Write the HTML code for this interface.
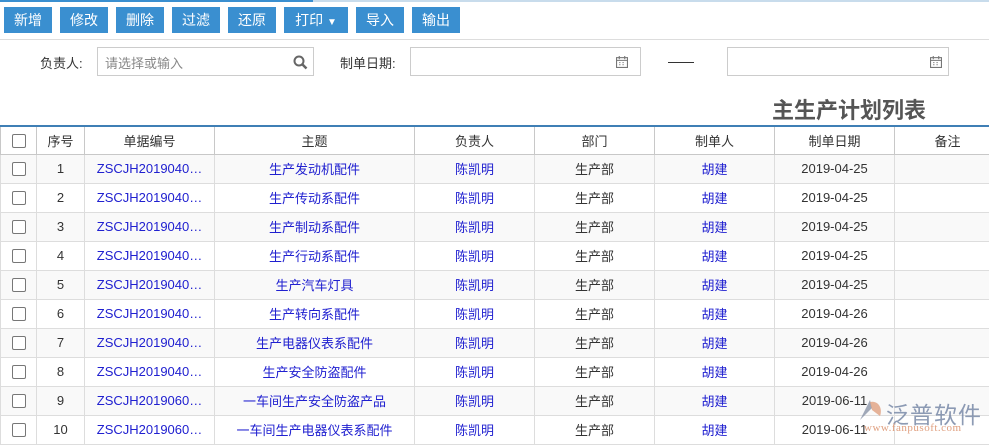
<!DOCTYPE html>
<html><head><meta charset="utf-8"><style>
*{margin:0;padding:0;box-sizing:border-box}
body{width:989px;height:442px;overflow:hidden;background:#fff;font-family:"Liberation Sans","Noto Sans CJK SC",sans-serif;font-size:13px;color:#333;position:relative}
.topline{position:absolute;left:0;top:0;width:989px;height:2px;background:#c8dcec}
.topline2{position:absolute;left:0;top:0;width:313px;height:2px;background:#3a8fd0}
.btn{position:absolute;top:7px;height:26px;background:#3a8fd0;color:#fff;font-size:14px;line-height:26px;text-align:center}
.sep{position:absolute;left:0;top:39px;width:989px;height:1px;background:#ddd}
.lbl{position:absolute;top:53px;font-size:13px;color:#333}
.inp{position:absolute;top:47px;height:29px;border:1px solid #ccc;background:#fff}
.title{position:absolute;left:772px;top:93px;font-size:22px;font-weight:bold;color:#555}
table{position:absolute;left:0;top:125px;border-collapse:collapse;table-layout:fixed;width:1000px;border-top:2px solid #3f7fb5}
td,th{border:1px solid #ddd;height:29px;text-align:center;font-weight:normal;white-space:nowrap;overflow:hidden;font-size:13px}
th{height:28px;border-color:#c8c8c8;color:#333}
tr:nth-child(even) td{background:#f9f9f9}
.b{color:#2020d0}
.cb{display:inline-block;width:14px;height:14px;border:1px solid #777;border-radius:2px;vertical-align:middle;background:#fff}
</style></head><body>
<div class="topline"></div><div class="topline2"></div>
<div class="btn" style="left:4px;width:48px">新增</div>
<div class="btn" style="left:60px;width:48px">修改</div>
<div class="btn" style="left:116px;width:48px">删除</div>
<div class="btn" style="left:172px;width:48px">过滤</div>
<div class="btn" style="left:228px;width:48px">还原</div>
<div class="btn" style="left:284px;width:64px">打印 <span style="font-size:10px">▼</span></div>
<div class="btn" style="left:356px;width:48px">导入</div>
<div class="btn" style="left:412px;width:48px">输出</div>
<div class="sep"></div>
<div class="lbl" style="left:40px">负责人:</div>
<div class="inp" style="left:97px;width:217px"><span style="position:absolute;left:7px;top:5px;color:#888">请选择或输入</span>
<svg style="position:absolute;right:5px;top:7px" width="15" height="15" viewBox="0 0 15 15"><circle cx="6" cy="6" r="4.5" fill="none" stroke="#666" stroke-width="2"/><path d="M9.5 9.5L13.5 13.5" stroke="#666" stroke-width="2.5"/></svg></div>
<div class="lbl" style="left:340px">制单日期:</div>
<div class="inp" style="left:410px;width:231px"><svg style="position:absolute;right:12px;top:8px" width="12" height="12" viewBox="0 0 11 11"><rect x="0.5" y="1.5" width="10" height="9" fill="none" stroke="#777"/><path d="M0 4h11M3 0v3M8 0v3M3 6h1M6 6h1M3 8h1M6 8h1" stroke="#777"/></svg></div>
<div style="position:absolute;left:668px;top:62px;width:26px;height:1px;background:#333"></div>
<div class="inp" style="left:727px;width:222px"><svg style="position:absolute;right:6px;top:8px" width="12" height="12" viewBox="0 0 11 11"><rect x="0.5" y="1.5" width="10" height="9" fill="none" stroke="#777"/><path d="M0 4h11M3 0v3M8 0v3M3 6h1M6 6h1M3 8h1M6 8h1" stroke="#777"/></svg></div>
<div class="title">主生产计划列表</div>
<table>
<colgroup><col style="width:36px"><col style="width:48px"><col style="width:130px"><col style="width:200px"><col style="width:120px"><col style="width:120px"><col style="width:120px"><col style="width:120px"><col style="width:106px"></colgroup>
<tr><th><span class="cb"></span></th><th>序号</th><th>单据编号</th><th>主题</th><th>负责人</th><th>部门</th><th>制单人</th><th>制单日期</th><th>备注</th></tr>
<tr><td><span class="cb"></span></td><td>1</td><td class="b">ZSCJH2019040…</td><td class="b">生产发动机配件</td><td class="b">陈凯明</td><td>生产部</td><td class="b">胡建</td><td>2019-04-25</td><td></td></tr>
<tr><td><span class="cb"></span></td><td>2</td><td class="b">ZSCJH2019040…</td><td class="b">生产传动系配件</td><td class="b">陈凯明</td><td>生产部</td><td class="b">胡建</td><td>2019-04-25</td><td></td></tr>
<tr><td><span class="cb"></span></td><td>3</td><td class="b">ZSCJH2019040…</td><td class="b">生产制动系配件</td><td class="b">陈凯明</td><td>生产部</td><td class="b">胡建</td><td>2019-04-25</td><td></td></tr>
<tr><td><span class="cb"></span></td><td>4</td><td class="b">ZSCJH2019040…</td><td class="b">生产行动系配件</td><td class="b">陈凯明</td><td>生产部</td><td class="b">胡建</td><td>2019-04-25</td><td></td></tr>
<tr><td><span class="cb"></span></td><td>5</td><td class="b">ZSCJH2019040…</td><td class="b">生产汽车灯具</td><td class="b">陈凯明</td><td>生产部</td><td class="b">胡建</td><td>2019-04-25</td><td></td></tr>
<tr><td><span class="cb"></span></td><td>6</td><td class="b">ZSCJH2019040…</td><td class="b">生产转向系配件</td><td class="b">陈凯明</td><td>生产部</td><td class="b">胡建</td><td>2019-04-26</td><td></td></tr>
<tr><td><span class="cb"></span></td><td>7</td><td class="b">ZSCJH2019040…</td><td class="b">生产电器仪表系配件</td><td class="b">陈凯明</td><td>生产部</td><td class="b">胡建</td><td>2019-04-26</td><td></td></tr>
<tr><td><span class="cb"></span></td><td>8</td><td class="b">ZSCJH2019040…</td><td class="b">生产安全防盗配件</td><td class="b">陈凯明</td><td>生产部</td><td class="b">胡建</td><td>2019-04-26</td><td></td></tr>
<tr><td><span class="cb"></span></td><td>9</td><td class="b">ZSCJH2019060…</td><td class="b">一车间生产安全防盗产品</td><td class="b">陈凯明</td><td>生产部</td><td class="b">胡建</td><td>2019-06-11</td><td></td></tr>
<tr><td><span class="cb"></span></td><td>10</td><td class="b">ZSCJH2019060…</td><td class="b">一车间生产电器仪表系配件</td><td class="b">陈凯明</td><td>生产部</td><td class="b">胡建</td><td>2019-06-11</td><td></td></tr>
</table>
<svg style="position:absolute;left:858px;top:396px" width="26" height="26" viewBox="0 0 26 26"><path d="M2 24L12 4L14 12Z" fill="#8a94a8" opacity=".8"/><path d="M12 6C20 4 25 12 22 20L14 14Z" fill="#e0a080" opacity=".8"/></svg>
<div style="position:absolute;left:886px;top:396px;font-size:23px;color:#7a8aa8;opacity:.85;letter-spacing:1px">泛普软件</div>
<div style="position:absolute;left:864px;top:422px;font-size:11px;color:#e0a080;font-family:'Liberation Serif',serif;letter-spacing:.5px">www.fanpusoft.com</div>
</body></html>
